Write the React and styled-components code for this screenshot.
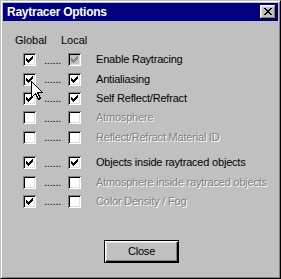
import React from 'react'
import styled, { createGlobalStyle } from 'styled-components'

const GlobalStyle = createGlobalStyle`
    html, body {
        margin: 0;
        padding: 0;
        background: #c0c0c0;
    }
    body {
        font-family: "Liberation Sans", Arial, sans-serif;
        font-size: 11px;
    }
`

const rows = [
    [
        { label: 'Enable Raytracing', global: true, local: 'dim' },
        { label: 'Antialiasing', global: true, local: true },
        { label: 'Self Reflect/Refract', global: true, local: true },
        { label: 'Atmosphere', global: false, local: false, disabled: true },
        { label: 'Reflect/Refract Material ID', global: false, local: false, disabled: true },
    ],
    [
        { label: 'Objects inside raytraced objects', global: true, local: true },
        { label: 'Atmosphere inside raytraced objects', global: false, local: false, disabled: true },
        { label: 'Color Density / Fog', global: true, local: false, disabled: true },
    ],
]

const Window = styled.div`
    position: relative;
    box-sizing: border-box;
    width: 281px;
    height: 279px;
    padding: 2px;
    background: #c0c0c0;
    border: 1px solid;
    border-color: #c0c0c0 #000 #000 #c0c0c0;
    box-shadow: inset 1px 1px #fff, inset -1px -1px #808080;
    display: flex;
    flex-direction: column;
    overflow: hidden;
`

const TitleBar = styled.div`
    height: 18px;
    background: #000080;
    display: flex;
    align-items: center;
    justify-content: space-between;
    padding: 0 2px 0 4px;
`

const Title = styled.span`
    color: #fff;
    font-weight: bold;
    font-size: 12px;
    letter-spacing: -0.25px;
    line-height: 14px;
`

const CloseBox = styled.div`
    box-sizing: border-box;
    width: 16px;
    height: 14px;
    background: #c0c0c0;
    box-shadow: inset -1px -1px #000, inset 1px 1px #fff, inset -2px -2px #808080, inset 2px 2px #dfdfdf;
    display: flex;
    align-items: center;
    justify-content: center;
    padding: 0 1px 1px 0;
`

const Body = styled.div`
    flex: 1;
    display: flex;
    flex-direction: column;
    padding: 13px 0 0 0;
`

const Header = styled.div`
    display: flex;
    line-height: 13px;
    padding-left: 12px;

    span:first-child {
        width: 46px;
    }
`

const Group = styled.div`
    display: flex;
    flex-direction: column;
    margin-top: ${props => props.first ? '3px' : '6px'};
`

const Row = styled.div`
    height: 19.4px;
    display: flex;
    align-items: center;
    padding-left: 20px;
`

const Dots = styled.span`
    width: 17px;
    margin: 0 7px 0 8px;
    line-height: 13px;
    letter-spacing: -0.2px;
    overflow: hidden;
    white-space: nowrap;
    padding-top: 1px;
`

const Label = styled.span`
    margin-left: 15px;
    line-height: 13px;
    white-space: nowrap;
    letter-spacing: -0.2px;
    color: ${props => props.disabled ? '#808080' : '#000'};
    text-shadow: ${props => props.disabled ? '1px 1px 0 #fff' : 'none'};
`

const Box = styled.div`
    box-sizing: border-box;
    width: 13px;
    height: 13px;
    flex: none;
    background: ${props => props.dim ? '#c0c0c0' : '#fff'};
    box-shadow: inset 1px 1px #808080, inset -1px -1px #fff, inset 2px 2px #000, inset -2px -2px #dfdfdf;
    display: flex;
    align-items: center;
    justify-content: center;
`

const Footer = styled.div`
    display: flex;
    justify-content: center;
    margin-top: 29px;
`

const Button = styled.button`
    box-sizing: border-box;
    width: 75px;
    height: 23px;
    margin-left: 2px;
    background: #c0c0c0;
    border: 1px solid #000;
    box-shadow: inset 1px 1px #fff, inset -1px -1px #000, inset -2px -2px #808080, inset 2px 2px #dfdfdf;
    font-family: "Liberation Sans", Arial, sans-serif;
    font-size: 11px;
    letter-spacing: -0.2px;
    color: #000;
    padding: 0 0 1px 0;
`

const Cursor = styled.svg`
    position: absolute;
    left: 30px;
    top: 80px;
`

const checkCells = [
    [6, 0], [5, 1], [6, 1], [0, 2], [4, 2], [5, 2], [6, 2],
    [0, 3], [1, 3], [3, 3], [4, 3], [5, 3],
    [0, 4], [1, 4], [2, 4], [3, 4], [4, 4],
    [1, 5], [2, 5], [3, 5], [2, 6],
]

const closeCells = [
    [0, 0], [1, 0], [6, 0], [7, 0],
    [1, 1], [2, 1], [5, 1], [6, 1],
    [2, 2], [3, 2], [4, 2], [5, 2],
    [3, 3], [4, 3],
    [2, 4], [3, 4], [4, 4], [5, 4],
    [1, 5], [2, 5], [5, 5], [6, 5],
    [0, 6], [1, 6], [6, 6], [7, 6],
]

const Bitmap = ({ cells, w, h, color }) => (
    <svg width={w} height={h} viewBox={`0 0 ${w} ${h}`} shapeRendering="crispEdges">
        {cells.map(([x, y]) => <rect key={x + '-' + y} x={x} y={y} width="1" height="1" fill={color} />)}
    </svg>
)

const CheckBox = ({ value }) => (
    <Box dim={value === 'dim'}>
        {value && <Bitmap cells={checkCells} w={7} h={7} color={value === 'dim' ? '#808080' : '#000'} />}
    </Box>
)

const RaytracerOptions = () => {
    return (
        <Window>
            <TitleBar>
                <Title>Raytracer Options</Title>
                <CloseBox>
                    <Bitmap cells={closeCells} w={8} h={7} color="#000" />
                </CloseBox>
            </TitleBar>
            <Body>
                <Header>
                    <span>Global</span>
                    <span>Local</span>
                </Header>
                {rows.map((group, i) => (
                    <Group key={i} first={i === 0}>
                        {group.map(r => (
                            <Row key={r.label}>
                                <CheckBox value={r.global} />
                                <Dots>......</Dots>
                                <CheckBox value={r.local} />
                                <Label disabled={r.disabled}>{r.label}</Label>
                            </Row>
                        ))}
                    </Group>
                ))}
                <Footer>
                    <Button>Close</Button>
                </Footer>
            </Body>
            <Cursor width="13" height="20" viewBox="0 0 13 20" shapeRendering="crispEdges">
                <path d="M0.5 0.5 L0.5 16.5 L4.5 12.5 L7.5 18.5 L9.5 17.5 L6.5 11.5 L11.5 11.5 Z" fill="#fff" stroke="#000" strokeWidth="1" />
            </Cursor>
        </Window>
    )
}

export default function App() {
    return (
        <>
            <GlobalStyle />
            <RaytracerOptions />
        </>
    )
}
